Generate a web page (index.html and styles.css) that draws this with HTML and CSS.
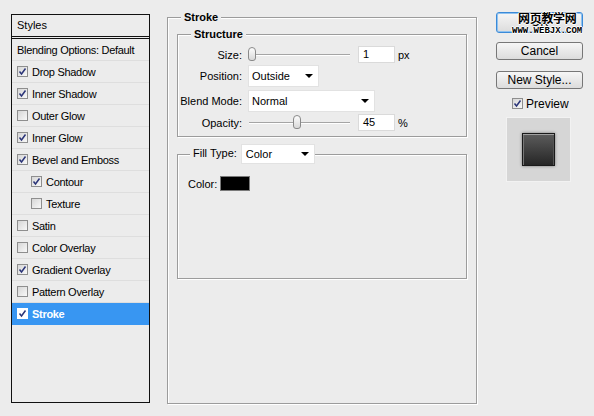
FILE: index.html
```html
<!DOCTYPE html>
<html>
<head>
<meta charset="utf-8">
<link rel="stylesheet" href="styles.css">
</head>
<body>
<div class="dialog">
  <div class="styles-panel">
    <div class="sp-head">Styles</div>
    <div class="sp-row">Blending Options: Default</div>
    <div class="sp-row"><span class="cb"><svg viewBox="0 0 9 9"><polyline points="1.5,4.5 3.5,7 7.5,1.5"/></svg></span>Drop Shadow</div>
    <div class="sp-row"><span class="cb"><svg viewBox="0 0 9 9"><polyline points="1.5,4.5 3.5,7 7.5,1.5"/></svg></span>Inner Shadow</div>
    <div class="sp-row"><span class="cb"></span>Outer Glow</div>
    <div class="sp-row"><span class="cb"><svg viewBox="0 0 9 9"><polyline points="1.5,4.5 3.5,7 7.5,1.5"/></svg></span>Inner Glow</div>
    <div class="sp-row"><span class="cb"><svg viewBox="0 0 9 9"><polyline points="1.5,4.5 3.5,7 7.5,1.5"/></svg></span>Bevel and Emboss</div>
    <div class="sp-row sub"><span class="cb"><svg viewBox="0 0 9 9"><polyline points="1.5,4.5 3.5,7 7.5,1.5"/></svg></span>Contour</div>
    <div class="sp-row sub"><span class="cb"></span>Texture</div>
    <div class="sp-row"><span class="cb"></span>Satin</div>
    <div class="sp-row"><span class="cb"></span>Color Overlay</div>
    <div class="sp-row"><span class="cb"><svg viewBox="0 0 9 9"><polyline points="1.5,4.5 3.5,7 7.5,1.5"/></svg></span>Gradient Overlay</div>
    <div class="sp-row"><span class="cb"></span>Pattern Overlay</div>
    <div class="sp-row active"><span class="cb"><svg viewBox="0 0 9 9"><polyline points="1.5,4.5 3.5,7 7.5,1.5"/></svg></span>Stroke</div>
  </div>

  <div class="group stroke-group">
    <span class="group-title">Stroke</span>
    <div class="group structure-group">
      <span class="group-title">Structure</span>
      <div class="frow r-size">
        <span class="flabel">Size:</span>
        <div class="slider"><span class="thumb" style="left:0px"></span></div>
        <span class="num">1</span>
        <span class="unit">px</span>
      </div>
      <div class="frow r-pos">
        <span class="flabel">Position:</span>
        <div class="select sel-pos">Outside<span class="arrow"></span></div>
      </div>
      <div class="frow r-blend">
        <span class="flabel">Blend Mode:</span>
        <div class="select sel-blend">Normal<span class="arrow"></span></div>
      </div>
      <div class="frow r-opac">
        <span class="flabel">Opacity:</span>
        <div class="slider"><span class="thumb" style="left:45px"></span></div>
        <span class="num">45</span>
        <span class="unit">%</span>
      </div>
    </div>
    <div class="group fill-group">
      <div class="fill-title">
        <span>Fill Type:</span>
        <div class="select sel-fill">Color<span class="arrow"></span></div>
      </div>
      <div class="color-row">
        <span>Color:</span>
        <span class="swatch"></span>
      </div>
    </div>
  </div>

  <div class="side">
    <div class="ok-wrap">
      <button class="btn ok">OK</button>
      <div class="watermark">
        <div class="wm-cn">网页教学网</div>
        <div class="wm-en">www.webjx.com</div>
      </div>
    </div>
    <button class="btn cancel">Cancel</button>
    <button class="btn newstyle">New Style...</button>
    <div class="preview-check"><span class="cb"><svg viewBox="0 0 9 9"><polyline points="1.5,4.5 3.5,7 7.5,1.5"/></svg></span>Preview</div>
    <div class="preview-box"><div class="preview-sq"></div></div>
  </div>
</div>
</body>
</html>
```
FILE: styles.css
```css
* { box-sizing: border-box; }
html, body { margin: 0; padding: 0; }
body {
  background: #ececec;
  font-family: "Liberation Sans", Arial, sans-serif;
  font-size: 11px;
  color: #000;
  width: 594px;
  height: 416px;
  overflow: hidden;
}
.dialog {
  display: flex;
  align-items: flex-start;
}

/* ---------- left styles list ---------- */
.styles-panel {
  margin: 14px 0 0 11px;
  width: 139px;
  height: 389px;
  border: 1px solid #111;
  background: #ececec;
}
.sp-head {
  height: 24px;
  line-height: 21px;
  padding-left: 5px;
  border-bottom: 3px double #111;
}
.sp-row {
  height: 22px;
  border-bottom: 1px solid #dedede;
  display: flex;
  align-items: center;
  gap: 4px;
  padding-left: 5px;
  letter-spacing: -0.3px;
}
.sp-row.sub { padding-left: 19px; }
.sp-row.active {
  background: #3896f2;
  color: #fff;
  font-weight: bold;
  border-bottom-color: #3896f2;
}
.cb {
  width: 11px;
  height: 11px;
  flex: none;
  border: 1px solid #8e8e8e;
  background: linear-gradient(135deg, #d6d6d6, #f8f8f8);
  display: inline-flex;
  align-items: center;
  justify-content: center;
}
.active .cb { background: #fff; border-color: #fff; }
.cb svg { width: 9px; height: 9px; }
.cb polyline {
  fill: none;
  stroke: #2a3478;
  stroke-width: 1.5;
}

/* ---------- group boxes ---------- */
.group {
  position: relative;
  border: 1px solid #9c9c9c;
  box-shadow: 1px 1px 0 #fff, inset 1px 1px 0 #fff;
}
.group-title {
  position: absolute;
  top: -7px;
  left: 13px;
  padding: 0 3px;
  background: #ececec;
  font-weight: bold;
  line-height: 13px;
}
.stroke-group {
  margin: 17px 0 0 17px;
  width: 310px;
  height: 387px;
  padding: 16px 9px 0 9px;
}
.structure-group {
  height: 103px;
  padding: 11px 0 0 0;
  display: flex;
  flex-direction: column;
}
.frow {
  display: flex;
  align-items: center;
}
.r-size { height: 17px; }
.r-pos { height: 22px; margin-top: 2px; }
.r-blend { height: 22px; margin-top: 3px; }
.r-opac { height: 17px; margin-top: 2px; }
.flabel {
  width: 64px;
  text-align: right;
  margin-right: 6px;
  flex: none;
}
.slider {
  position: relative;
  width: 102px;
  height: 15px;
  flex: none;
}
.slider::before {
  content: "";
  position: absolute;
  left: 1px;
  right: 0;
  top: 7px;
  border-top: 1px solid #a5a5a5;
  border-bottom: 1px solid #fff;
}
.thumb {
  position: absolute;
  top: 0;
  width: 8px;
  height: 14px;
  border: 1px solid #8a8a8a;
  border-radius: 4px 4px 3px 3px;
  background: linear-gradient(#fdfdfd, #d8d8d8);
}
.num {
  margin-left: 8px;
  width: 37px;
  height: 17px;
  background: #fff;
  border: 1px solid #dadada;
  padding-left: 4px;
  line-height: 15px;
  flex: none;
}
.unit { margin-left: 3px; }
.select {
  position: relative;
  height: 22px;
  background: #fff;
  border: 1px solid #e2e2e2;
  padding-left: 3px;
  line-height: 20px;
  flex: none;
}
.sel-pos { width: 71px; }
.sel-blend { width: 127px; }
.sel-fill { width: 74px; height: 20px; line-height: 18px; padding-left: 4px; }
.arrow {
  position: absolute;
  right: 5px;
  top: 50%;
  margin-top: -2px;
  width: 0;
  height: 0;
  border-left: 4px solid transparent;
  border-right: 4px solid transparent;
  border-top: 4px solid #000;
}

.fill-group {
  margin-top: 17px;
  height: 125px;
  padding: 21px 0 0 10px;
}
.fill-title {
  position: absolute;
  top: -11px;
  left: 12px;
  height: 20px;
  padding: 0 0 0 3px;
  display: flex;
  align-items: center;
  gap: 4px;
  background: #ececec;
}
.fill-title > span { margin-top: -2px; }
.color-row {
  display: flex;
  align-items: center;
  gap: 3px;
  height: 15px;
}
.swatch {
  width: 30px;
  height: 15px;
  background: #000;
  border: 1px solid #7a7a7a;
}

/* ---------- right side ---------- */
.side {
  margin: 12px 0 0 19px;
  width: 87px;
  display: flex;
  flex-direction: column;
}
.btn {
  display: block;
  width: 87px;
  height: 18px;
  padding: 0;
  font-family: "Liberation Sans", Arial, sans-serif;
  font-size: 12px;
  color: #000;
  background: linear-gradient(#f6f6f6, #dcdcdc);
  border: 1px solid #777;
  border-radius: 3px;
  line-height: 16px;
}
.ok-wrap { position: relative; }
.btn.ok {
  height: 21px;
  border: 1px solid #3a8ad8;
  box-shadow: inset 0 0 0 1px #8fc2f0;
  line-height: 19px;
}
.cancel { margin-top: 9px; }
.newstyle { margin-top: 11px; }
.watermark {
  position: absolute;
  top: 0;
  left: 16px;
  text-align: left;
  color: #000;
  line-height: 1;
}
.wm-cn {
  font-family: "Noto Sans CJK SC", sans-serif;
  font-size: 12px;
  font-weight: bold;
  padding-left: 6px;
  letter-spacing: -0.3px;
  text-shadow: 1px 0 0 #fff, -1px 0 0 #fff, 0 1px 0 #fff, 0 -1px 0 #fff;
}
.wm-en {
  font-family: "Liberation Mono", monospace;
  font-size: 9px;
  font-weight: bold;
  text-transform: uppercase;
  margin-top: 3px;
  text-shadow: 1px 0 0 #fff, -1px 0 0 #fff, 0 1px 0 #fff, 0 -1px 0 #fff;
}
.preview-check {
  margin: 8px 0 0 16px;
  display: flex;
  align-items: center;
  gap: 3px;
  font-size: 12px;
  height: 13px;
}
.preview-box {
  margin: 7px 0 0 10px;
  width: 65px;
  height: 65px;
  background: #d6d6d6;
  border: 1px solid #f2f2f2;
  display: flex;
  align-items: center;
  justify-content: center;
}
.preview-sq {
  width: 33px;
  height: 33px;
  background: linear-gradient(#5c5c5c, #262626);
  border: 1px solid #1a1a1a;
  box-shadow: inset 0 1px 0 #a0a0a0, inset 1px 0 0 #777, inset -1px 0 0 #555, 0 0 3px rgba(0,0,0,0.45);
}
```
